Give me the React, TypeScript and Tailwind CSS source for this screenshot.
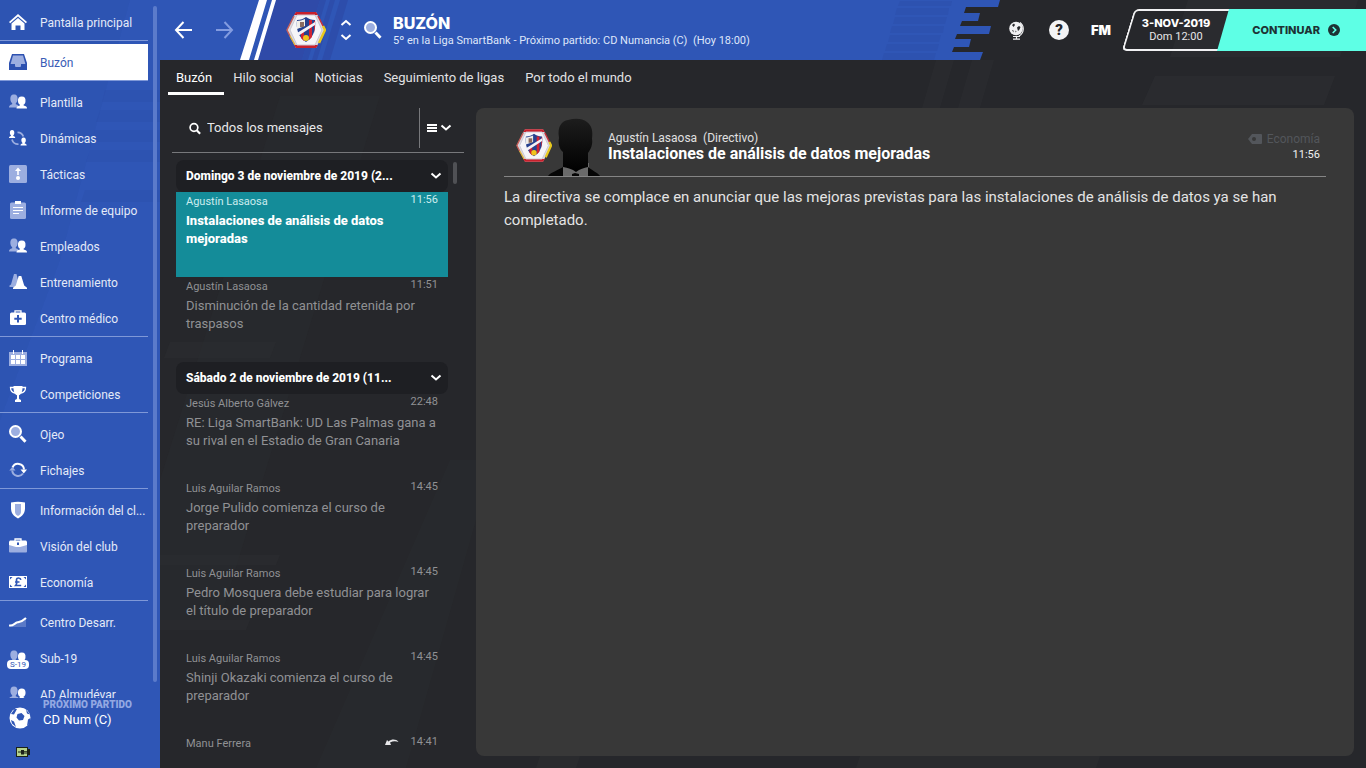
import React, { useState } from "react";
import clsx from "clsx";

type NavItem = { label: string; icon: React.ReactNode; active?: boolean };

type Message = {
  from: string;
  time: string;
  subject: string;
  selected?: boolean;
  replied?: boolean;
};

type MessageGroup = { title: string; messages: Message[] };

const soft = "#9caee0";

const Icon = ({ children }: { children: React.ReactNode }) => (
  <svg viewBox="0 0 18 18" className="size-[18px] shrink-0" aria-hidden="true">
    {children}
  </svg>
);

const bust =
  "M0 13c0-2 1-2.300 3.200-3.200V8.700C2.200 8 1.700 7 1.500 5.800 1 2 2.200 0 5 0s4 2 3.500 5.800C8.300 7 7.800 8 6.800 8.700v1.100C9 10.700 10 11 10 13z";

const homeIcon = (
  <Icon>
    <path d="M9 1 0 9l1.200 1.200L9 3.400l7.800 6.800L18 9z" fill="#fff" />
    <path d="M2.500 10.500 9 5l6.500 5.500V17h-4v-4.500h-5V17h-4z" fill="#fff" />
  </Icon>
);

const inboxIcon = (
  <Icon>
    <path d="M3 1h12l3 9v7H0v-7z" fill="#2d51b0" />
    <path d="M4 2.500h10l2.400 8.500H12v1.500c0 1-.5 1.500-1.500 1.500h-3C6.500 14 6 13.500 6 12.500V11H1.600z" fill={soft} />
  </Icon>
);

const dynamicsIcon = (
  <Icon>
    <path d={bust} transform="translate(0 1) scale(.62)" fill="#fff" />
    <path d={bust} transform="translate(11.500 8.500) scale(.62)" fill="#fff" />
    <path d="M8.500 3.300a6 6 0 0 1 5.800 4.200M3 10.500a6 6 0 0 0 6.500 4.600" fill="none" stroke={soft} strokeWidth="1.800" />
  </Icon>
);

const tacticsIcon = (
  <Icon>
    <rect width="18" height="18" rx="1.500" fill={soft} />
    <path d="m9 2.500 3 3.500h-2.200v4H8.200V6H6z" fill="#fff" />
    <circle cx="9" cy="13" r="2" fill="#fff" />
  </Icon>
);

const reportIcon = (
  <Icon>
    <rect x="1" y="1.500" width="16" height="16.500" rx="1.500" fill={soft} />
    <path d="M6 0h6v3H6zM4 6h10v1H4zm0 3h10v1H4zm0 3h6v1H4z" fill="#fff" />
  </Icon>
);

const coneIcon = (
  <Icon>
    <path d="M5 1h2.500l2 8-3 5H.5V12.500L2 11.500z" fill={soft} />
    <path d="M9.700 3h2.600l2.900 9.500 2.800 2.300V16H4v-1.200l2.800-2.300z" fill="#fff" />
  </Icon>
);

const medicalIcon = (
  <Icon>
    <path d="M6 4V1.800h6V4" fill="none" stroke="#fff" strokeWidth="1.300" />
    <rect x="1" y="3.500" width="16" height="12.500" rx="1.500" fill="#fff" />
    <path d="M8 6h2v2.700h2.700v2H10v2.700H8v-2.700H5.300v-2H8z" fill="#2f56b6" />
  </Icon>
);

const calendarIcon = (
  <Icon>
    <path d="M0 3h18v14H0z" fill={soft} />
    <path d="M4 1h1v4H4zm9 0h1v4h-1zM2 6h4v4H2zm5 0h4v4H7zm5 0h4v4h-4zM2 11h4v4H2zm5 0h4v4H7zm5 0h4v4h-4z" fill="#fff" />
  </Icon>
);

const trophyIcon = (
  <Icon>
    <path d="M4.500 1h9c.2 4.500-.7 8-3.500 9.300V13c0 1 .6 1.500 2 2v2H6v-2c1.400-.5 2-1 2-2v-2.700C5.200 9 4.300 5.500 4.500 1z" fill="#fff" />
    <path d="M5 2.500H1.500C1.500 6 3 7.500 6 8M13 2.500h3.500C16.500 6 15 7.500 12 8" fill="none" stroke="#fff" strokeWidth="1.300" />
  </Icon>
);

const lensIcon = (
  <Icon>
    <circle cx="6.500" cy="6.500" r="5.500" fill={soft} stroke="#fff" strokeWidth="2" />
    <path d="m11.500 11.500 5 5.200" stroke="#fff" strokeWidth="3" />
  </Icon>
);

const transferIcon = (
  <Icon>
    <path d="M3.500 6.500A6 6 0 0 1 15 8.500" fill="none" stroke="#fff" strokeWidth="2" />
    <path d="M11.500 8.500H18l-3.200 4z" fill="#fff" />
    <path d="M14 12.500A6 6 0 0 1 3.200 9.500" fill="none" stroke={soft} strokeWidth="2" />
    <path d="M.3 9.500H6.500L3.400 5.800z" fill={soft} />
  </Icon>
);

const shieldIcon = (
  <Icon>
    <path d="M2 1.500c5-1 9-1 14 0v6c0 4.500-2.500 7.500-7 10-4.500-2.500-7-5.500-7-10z" fill="#fff" />
    <path d="M6 3h6v8c0 2-1.500 3-3 4-1.500-1-3-2-3-4z" fill={soft} />
  </Icon>
);

const briefcaseIcon = (
  <Icon>
    <path d="M0 7h18v7.500a1 1 0 0 1-1 1H1a1 1 0 0 1-1-1z" fill={soft} />
    <path d="M6 4V2h6v2" fill="none" stroke="#fff" strokeWidth="1.300" />
    <path d="M1 3.500h16l1 1V8l-7 2H7L0 8V4.500z" fill="#fff" />
    <rect x="8" y="5.500" width="2" height="2.500" fill="#2f56b6" />
  </Icon>
);

const moneyIcon = (
  <Icon>
    <path d="M0 3h18v12H0z" fill="#fff" />
    <path d="M1 4h2.500L1 6.500zM17 4h-2.500L17 6.500zM1 14h2.500L1 11.500zM17 14h-2.500l2.500-2.500z" fill="#2f56b6" />
    <path d="M11.800 6.800C11.500 4.500 7.500 4.200 7.500 7c0 2 1 3.500-.8 5.500h5.500M6 9h4.500" fill="none" stroke="#2f56b6" strokeWidth="1.700" />
  </Icon>
);

const growthIcon = (
  <Icon>
    <path d="M1 13c4 .5 5-3 8-3.500s5-1 8-4.500v9H1z" fill={soft} opacity=".4" />
    <path d="M0 12.500c4.500.8 5.500-2.500 8.500-3.200 3-.6 5-.8 8.500-4.300" fill="none" stroke="#fff" strokeWidth="2" />
  </Icon>
);

const peopleIcon = (
  <Icon>
    <path d={bust} transform="translate(0 1.500)" fill={soft} />
    <path d={bust} transform="translate(7.500 3.500) scale(1.050 .930)" fill="#fff" />
  </Icon>
);

const navGroups: NavItem[][] = [
  [{ label: "Pantalla principal", icon: homeIcon }],
  [{ label: "Buzón", icon: inboxIcon, active: true }],
  [
    { label: "Plantilla", icon: peopleIcon },
    { label: "Dinámicas", icon: dynamicsIcon },
    { label: "Tácticas", icon: tacticsIcon },
    { label: "Informe de equipo", icon: reportIcon },
    { label: "Empleados", icon: peopleIcon },
    { label: "Entrenamiento", icon: coneIcon },
    { label: "Centro médico", icon: medicalIcon },
  ],
  [
    { label: "Programa", icon: calendarIcon },
    { label: "Competiciones", icon: trophyIcon },
  ],
  [
    { label: "Ojeo", icon: lensIcon },
    { label: "Fichajes", icon: transferIcon },
  ],
  [
    { label: "Información del cl...", icon: shieldIcon },
    { label: "Visión del club", icon: briefcaseIcon },
    { label: "Economía", icon: moneyIcon },
  ],
  [
    { label: "Centro Desarr.", icon: growthIcon },
    {
      label: "Sub-19",
      icon: (
        <span className="relative">
          {peopleIcon}
          <span className="absolute top-[11px] -left-[2px] w-[22px] rounded-sm bg-white text-center text-[8px] leading-[9px] text-[#2f56b6]">
            S-19
          </span>
        </span>
      ),
    },
    { label: "AD Almudévar", icon: peopleIcon },
  ],
];

const tabs = ["Buzón", "Hilo social", "Noticias", "Seguimiento de ligas", "Por todo el mundo"];

const messageGroups: MessageGroup[] = [
  {
    title: "Domingo 3 de noviembre de 2019 (2...",
    messages: [
      { from: "Agustín Lasaosa", time: "11:56", subject: "Instalaciones de análisis de datos mejoradas", selected: true },
      { from: "Agustín Lasaosa", time: "11:51", subject: "Disminución de la cantidad retenida por traspasos" },
    ],
  },
  {
    title: "Sábado 2 de noviembre de 2019 (11...",
    messages: [
      { from: "Jesús Alberto Gálvez", time: "22:48", subject: "RE: Liga SmartBank: UD Las Palmas gana a su rival en el Estadio de Gran Canaria" },
      { from: "Luis Aguilar Ramos", time: "14:45", subject: "Jorge Pulido comienza el curso de preparador" },
      { from: "Luis Aguilar Ramos", time: "14:45", subject: "Pedro Mosquera debe estudiar para lograr el título de preparador" },
      { from: "Luis Aguilar Ramos", time: "14:45", subject: "Shinji Okazaki comienza el curso de preparador" },
      { from: "Manu Ferrera", time: "14:41", subject: "", replied: true },
    ],
  },
];

function Crest({ className }: { className?: string }) {
  return (
    <svg viewBox="0 0 40 38" className={className} aria-hidden="true">
      <path d="M10 1h20l9 18-9 18H10L1 19z" fill="#dcd9e0" />
      <path d="M10 1h20l2 3H8zM8 34h24l-2 3H10z" fill="#c8202c" />
      <path d="M8 5 1 19l3 6" fill="none" stroke="#c9605a" strokeWidth="1.500" />
      <path d="m4 25 5 9" stroke="#e0b43a" strokeWidth="1.500" />
      <path d="m32 5 5 10" stroke="#c8303a" strokeWidth="1.500" />
      <path d="m37 15 2 4-6 13" fill="none" stroke="#e8c91e" strokeWidth="2.500" />
      <path d="M11 4h18l7 15-7 15H11L4 19z" fill="#f6f5f8" stroke="#c9c7d2" />
      <path d="M11 9c4 0 6-1 9-3 3 2 5 3 9 3 1 9-1 17-9 22-8-5-10-13-9-22z" fill="#26418f" />
      <path d="M23 9v20l3-3V9zM15 20v7l3 3V18zM28 10v12l1-6v-6z" fill="#cf2333" />
      <path d="M11 10c3 0 5-1 8-2v7l-8 3z" fill="#f1eee9" />
      <path d="M14 11h4v5h-4z" fill="#8a6a60" />
      <path d="m11 22 18-11v3L12 25z" fill="#f5f3f7" />
      <circle cx="20" cy="27" r="3" fill="#f0c41b" />
    </svg>
  );
}

function Backdrop() {
  return (
    <svg
      viewBox="0 0 1206 768"
      preserveAspectRatio="xMidYMid slice"
      className="pointer-events-none absolute inset-0 size-full"
      aria-hidden="true"
    >
      <g fill="#2c2d31">
        <path d="M995 76h180l-11 29H982zM1028 0h170l-18 57H1010z" opacity=".8" />
        <path d="M776 60h18l-14 48h-18zM812 60h22l-14 48h-22z" opacity=".6" />
        <path d="M120 96h100L60 620H0V480z" opacity=".35" />
        <path d="M290 460h26v60l-70 248h-90z" opacity=".35" />
        <path d="M0 555h120l-4 10H0zM0 620h90l-4 10H0zM10 342h106l-6 16H4z" opacity=".6" />
        <path d="M380 756h40l-4 12h-40zM700 756h240l-4 12H696z" opacity=".7" />
      </g>
    </svg>
  );
}

function Sidebar() {
  return (
    <aside className="relative flex w-40 shrink-0 flex-col bg-[#2f56b6] text-[#e4eaf8]">
      <svg
        viewBox="0 0 160 768"
        preserveAspectRatio="none"
        className="pointer-events-none absolute inset-0 size-full"
        aria-hidden="true"
      >
        <path d="M0 0h130L60 260 0 420z" fill="#2c50ad" opacity=".35" />
        <path d="M105 90h55v12h-58zM100 110h60v12H96zM95 130h65v12H91zM90 150h70v12H86zM85 190h75v12H81z" fill="#2a4ca6" opacity=".3" />
      </svg>
      <nav className="relative flex min-h-0 flex-1 overflow-hidden">
        <div className="w-[148px]">
          {navGroups.map((group, i) => (
            <ul
              key={group[0].label}
              className={clsx("border-t pt-[3px]", i === 0 ? "border-transparent" : "border-[#7f98d8]")}
            >
              {group.map((item) => (
                <li key={item.label}>
                  <a
                    href="#"
                    className={clsx(
                      "flex h-9 items-center gap-3 pl-[9px] text-[12px] whitespace-nowrap",
                      item.active && "bg-white text-[#3a5cb6]",
                    )}
                  >
                    {item.icon}
                    <span className="pt-[2px] pl-px">{item.label}</span>
                  </a>
                </li>
              ))}
            </ul>
          ))}
        </div>
        <div className="mt-[6px] mb-4 ml-[5px] w-1 rounded-full bg-[#5b7bcb]" />
      </nav>
      <div className="relative flex h-[70px] shrink-0 flex-col justify-between pt-px pb-[11px]">
        <a href="#" className="flex items-end gap-3 pl-[9px]">
          <svg viewBox="0 0 22 22" className="size-[22px] shrink-0" aria-hidden="true">
            <circle cx="11" cy="11" r="10.500" fill="#fff" />
            <path d="m8.500 7 4-1 3 3-1.500 4-4 .5-2.500-3zM2 7l3.500-5L8 2 5 7.500zM17 2.500l4 5-3-1zM2 13l3 1.500L7 20l-4-3.500zM19 12.500l2.500-1.500v4L18 19z" fill="#2f56b6" />
          </svg>
          <span className="flex flex-col">
            <span className="text-[10px] leading-3 font-black text-[#93a8e2]">PRÓXIMO PARTIDO</span>
            <span className="text-[13px] leading-[18px] text-white">CD Num (C)</span>
          </span>
        </a>
        <svg viewBox="0 0 14 10" className="ml-4 h-[10px] w-[14px]" aria-hidden="true">
          <path d="M0 0h12v2h2v6h-2v2H0z" fill="#1b2218" />
          <path d="M1 1h10v8H1z" fill="#b5d28a" />
          <path d="M2 4.500h3V3h3v1h3v.8H8v.8h3v.9H8v1H5V5.500H2z" fill="#1b2218" />
        </svg>
      </div>
    </aside>
  );
}

function TopBar() {
  return (
    <header className="relative flex h-[60px] shrink-0">
      <div className="relative flex flex-1 items-center overflow-hidden bg-[#2f56b6]">
        <svg viewBox="0 0 220 60" className="pointer-events-none absolute top-0 left-0 h-[60px] w-[220px]" aria-hidden="true">
          <path d="M116 0h44l-18 60H98z" fill="#2f4aa8" />
          <path d="M160 0h6l-18 60h-6zM170 0h5l-18 60h-5zM180 0h8l-18 60h-8z" fill="#2d4dab" />
          <path d="M99 0h8L89 60h-9zM112 0h4L98 60h-4z" fill="#fff" />
        </svg>
        <div className="relative flex items-center">
          <button type="button" aria-label="Atrás" className="ml-[14px]">
            <svg viewBox="0 0 20 20" className="size-5" fill="none" stroke="#fff" strokeWidth="2">
              <path d="M18 10H2M9.500 2 2 10l7.500 8" />
            </svg>
          </button>
          <button type="button" aria-label="Adelante" className="ml-5">
            <svg viewBox="0 0 20 20" className="size-5" fill="none" stroke="#839ce0" strokeWidth="2">
              <path d="M2 10h16M10.500 2l7.500 8-7.500 8" />
            </svg>
          </button>
          <Crest className="ml-[52px] h-[38px] w-10" />
          <div className="ml-[14px] flex flex-col gap-2">
            <button type="button" aria-label="Anterior">
              <svg viewBox="0 0 12 7" className="h-[7px] w-3" fill="none" stroke="#fff" strokeWidth="2">
                <path d="m1.500 6 4.500-4 4.500 4" />
              </svg>
            </button>
            <button type="button" aria-label="Siguiente">
              <svg viewBox="0 0 12 7" className="h-[7px] w-3" fill="none" stroke="#fff" strokeWidth="2">
                <path d="m1.500 1 4.500 4 4.500-4" />
              </svg>
            </button>
          </div>
          <button type="button" aria-label="Buscar" className="ml-3">
            {lensIcon}
          </button>
          <div className="ml-[11px] pt-px whitespace-nowrap text-white">
            <h1 className="font-['Inter',sans-serif] text-[16px] leading-5 font-extrabold">BUZÓN</h1>
            <p className="text-[11px] leading-4 whitespace-pre text-[#dfe7fa]">
              5º en la Liga SmartBank - Próximo partido: CD Numancia (C)  (Hoy 18:00)
            </p>
          </div>
        </div>
      </div>
      <svg viewBox="0 0 130 60" className="h-[60px] w-[130px] shrink-0" aria-hidden="true">
        <path
          d="M0 0h130l-2 7H96l-2 6h16l-2 8H92l-2 5h31l-2 8H87l-2 5h16l-2 8H84l-2 5h31l-3 8H0z"
          fill="#2f56b6"
        />
        <path
          d="M30 1h52l-1 5H28zM27 8h52l-1 7H25zM25 17h52l-2 7H23zM22 26h52l-1 7H20zM20 35h51l-2 7H18zM17 44h52l-2 7H15zM14 53h52l-2 7H12z"
          fill="#2d52b0"
        />
      </svg>
      <div className="flex w-[366px] shrink-0 items-center">
        <button type="button" aria-label="Mundo" className="ml-2">
          <svg viewBox="0 0 18 20" className="h-5 w-[18px]">
            <circle cx="8" cy="8.500" r="6.800" fill="#f1f1f3" />
            <path d="M12 2.500a8 8 0 0 1-1 13.500M5 16.500h7M8.500 16v3M5 19.200h7" fill="none" stroke="#f1f1f3" strokeWidth="1.200" />
            <path d="m4 5 2-1.500 1 1.500-1.500 2zM9 7.500l2-1.500 1.500 1-1 2.500-1.500 1.500zM4 10l1.500.5v2zM7.500 10.500l1 1-1 1z" fill="#26272b" />
          </svg>
        </button>
        <button
          type="button"
          aria-label="Ayuda"
          className="ml-[23px] flex size-5 items-center justify-center rounded-full bg-[#f4f4f5] text-[15px] leading-5 font-black text-[#26272b]"
        >
          ?
        </button>
        <button type="button" className="ml-[22px] font-['Inter',sans-serif] text-[13px] leading-5 font-black text-white">
          FM
        </button>
        <div className="relative ml-auto flex h-[42px] w-[106px] flex-col items-center justify-center text-white">
          <div className="absolute inset-y-0 right-0 left-[5px] -skew-x-[17deg] rounded-l-[5px] border-2 border-r-0 border-[#f1f1f3]" />
          <strong className="font-['Inter',sans-serif] text-[11px] leading-[14px] font-extrabold">3-NOV-2019</strong>
          <span className="text-[11px] leading-[14px] text-[#e6e6e8]">Dom 12:00</span>
        </div>
        <button
          type="button"
          className="relative -ml-3 flex h-[42px] w-[149px] shrink-0 items-center justify-end gap-2 bg-[#5effe5] pr-[26px] font-['Inter',sans-serif] text-[11px] font-extrabold text-[#1d3334] [clip-path:polygon(12px_0,100%_0,100%_100%,0_100%)]"
        >
          CONTINUAR
          <svg viewBox="0 0 12 12" className="size-3" aria-hidden="true">
            <circle cx="6" cy="6" r="6" fill="#1d3334" />
            <path d="m4.700 3 3 3-3 3" fill="none" stroke="#5effe5" strokeWidth="1.600" />
          </svg>
        </button>
      </div>
    </header>
  );
}

const Chevron = () => (
  <svg viewBox="0 0 12 8" className="h-2 w-3 shrink-0" fill="none" stroke="#fff" strokeWidth="2" aria-hidden="true">
    <path d="m1.500 1.500 4.500 4 4.500-4" />
  </svg>
);

function MessageRow({ message }: { message: Message }) {
  return (
    <li>
      <a
        href="#"
        className={clsx(
          "block h-[85px] px-[10px]",
          message.selected ? "bg-[#148c99] text-white" : "text-[#909194]",
        )}
      >
        <span className={clsx("flex items-start text-[11px] leading-4", message.selected && "text-[#cdecef]")}>
          <span className="pt-[2px]">{message.from}</span>
          {message.replied && (
            <svg viewBox="0 0 14 8" className="mt-1 mr-3 ml-auto h-2 w-[14px]" aria-label="Respondido">
              <path d="m0 7 2-5 1.500 1.500C7 .8 11 1 13.500 4 10.500 2.700 8 3 5 4.500L6 7z" fill="#e8e8ea" />
            </svg>
          )}
          <span className={message.replied ? "" : "ml-auto"}>{message.time}</span>
        </span>
        <span className={clsx("mt-[2px] block text-[13px] leading-[18px]", message.selected && "font-extrabold")}>
          {message.subject}
        </span>
      </a>
    </li>
  );
}

function MessageList() {
  const [query, setQuery] = useState("");
  return (
    <section className="flex w-[292px] shrink-0 flex-col">
      <div className="flex h-[45px] items-start border-b border-[#77787b]">
        <label className="flex h-10 flex-1 items-center gap-[6px] pl-[17px]">
          <svg viewBox="0 0 14 14" className="size-[13px]" fill="none" stroke="#fff" strokeWidth="2">
            <circle cx="5.800" cy="5.800" r="4.500" />
            <path d="m9 9 4 4" strokeWidth="2.500" />
          </svg>
          <input
            type="text"
            aria-label="Buscar mensajes"
            placeholder="Todos los mensajes"
            value={query}
            onChange={(e) => setQuery(e.target.value)}
            className="w-full bg-transparent text-[13px] text-[#e8e8ea] outline-none placeholder:text-[#e8e8ea]"
          />
        </label>
        <button
          type="button"
          aria-label="Opciones"
          className="flex h-10 w-[45px] items-center gap-[3px] border-l border-[#77787b] pl-[7px]"
        >
          <svg viewBox="0 0 10 8" className="h-2 w-[10px]" fill="#fff">
            <path d="M0 0h10v2H0zm0 3h10v2H0zm0 3h10v2H0z" />
          </svg>
          <Chevron />
        </button>
      </div>
      <div className="mt-[7px] flex min-h-0 flex-1 overflow-hidden pl-1">
        <div className="w-[272px]">
          {messageGroups.map((group) => (
            <section key={group.title}>
              <button
                type="button"
                className="flex h-8 w-full items-center justify-between rounded-lg bg-[#1e1f23] pr-[6px] pl-[10px] text-[12px] font-extrabold text-white"
              >
                {group.title}
                <Chevron />
              </button>
              <ul>
                {group.messages.map((message, i) => (
                  <MessageRow key={i} message={message} />
                ))}
              </ul>
            </section>
          ))}
        </div>
        <div className="mt-[2px] ml-[5px] h-[22px] w-1 rounded-sm bg-[#505155]" />
      </div>
    </section>
  );
}

function Article() {
  return (
    <article className="min-w-0 flex-1 rounded-lg bg-[#383838] px-7 pt-[10px]">
      <div className="flex h-[59px] items-center border-b border-[#858585] pr-[6px] pb-[3px] pl-3">
        <Crest className="h-[35px] w-9" />
        <svg viewBox="0 0 52 58" className="-mb-[3px] -ml-1 h-[58px] w-[52px] self-end" aria-hidden="true">
          <defs>
            <linearGradient id="head" x1="0" y1="0" x2="0" y2="1">
              <stop offset="0" stopColor="#1d1d1d" />
              <stop offset="1" stopColor="#000" />
            </linearGradient>
          </defs>
          <path d="M15 45h26v13H15z" fill="#6a6a6a" />
          <path d="M0 58c3-4 11-6 15-9v9zM52 58c-3-4-9-6-12-9v9z" fill="#050505" />
          <path d="m24 56 3-1 4 1v2h-7z" fill="#050505" />
          <path
            d="M15 34c-4-3-5-9-4-14C9 8 14 3 20 2c7-2 14-2 19 2 5 4 6 9 5 17 1 5-1 10-4 14v14c-4 1-8 2-12 5-4-3-8-4-13-5z"
            fill="url(#head)"
          />
        </svg>
        <div className="ml-2">
          <p className="text-[12px] leading-4 whitespace-pre text-[#e0e0e0]">Agustín Lasaosa  (Directivo)</p>
          <h2 className="text-[16px] leading-4 font-bold text-white">Instalaciones de análisis de datos mejoradas</h2>
        </div>
        <div className="ml-auto flex flex-col items-end pt-[3px]">
          <span className="flex items-center gap-[5px] text-[12px] leading-4 text-[#53565b]">
            <svg viewBox="0 0 14 10" className="h-[10px] w-[14px]" aria-hidden="true">
              <path d="M4 0h9a1 1 0 0 1 1 1v8a1 1 0 0 1-1 1H4L0 5z" fill="#53565b" />
              <circle cx="6" cy="5" r="2" fill="#383838" />
            </svg>
            Economía
          </span>
          <time className="text-[11px] leading-4 text-[#f0f0f0]">11:56</time>
        </div>
      </div>
      <p className="mt-[9px] text-[15px] leading-[23px] text-[#e4e4e4]">
        La directiva se complace en anunciar que las mejoras previstas para las instalaciones de análisis de datos ya
        se han completado.
      </p>
    </article>
  );
}

export default function App() {
  return (
    <div className="flex h-screen overflow-hidden bg-[#26272b] font-['Roboto',sans-serif]">
      <Sidebar />
      <div className="relative flex min-w-0 flex-1 flex-col">
        <Backdrop />
        <TopBar />
        <nav className="relative flex h-9 shrink-0 gap-px pl-2 text-[13px] text-[#e2e2e4]">
          {tabs.map((tab, i) => (
            <a
              key={tab}
              href="#"
              className={clsx(
                "flex h-[35px] items-center border-b-[3px] pt-[3px] pr-3 pl-2",
                i === 0 ? "border-white text-white" : "border-transparent",
              )}
            >
              {tab}
            </a>
          ))}
        </nav>
        <main className="relative flex min-h-0 flex-1 gap-3 p-3">
          <MessageList />
          <Article />
        </main>
      </div>
    </div>
  );
}
